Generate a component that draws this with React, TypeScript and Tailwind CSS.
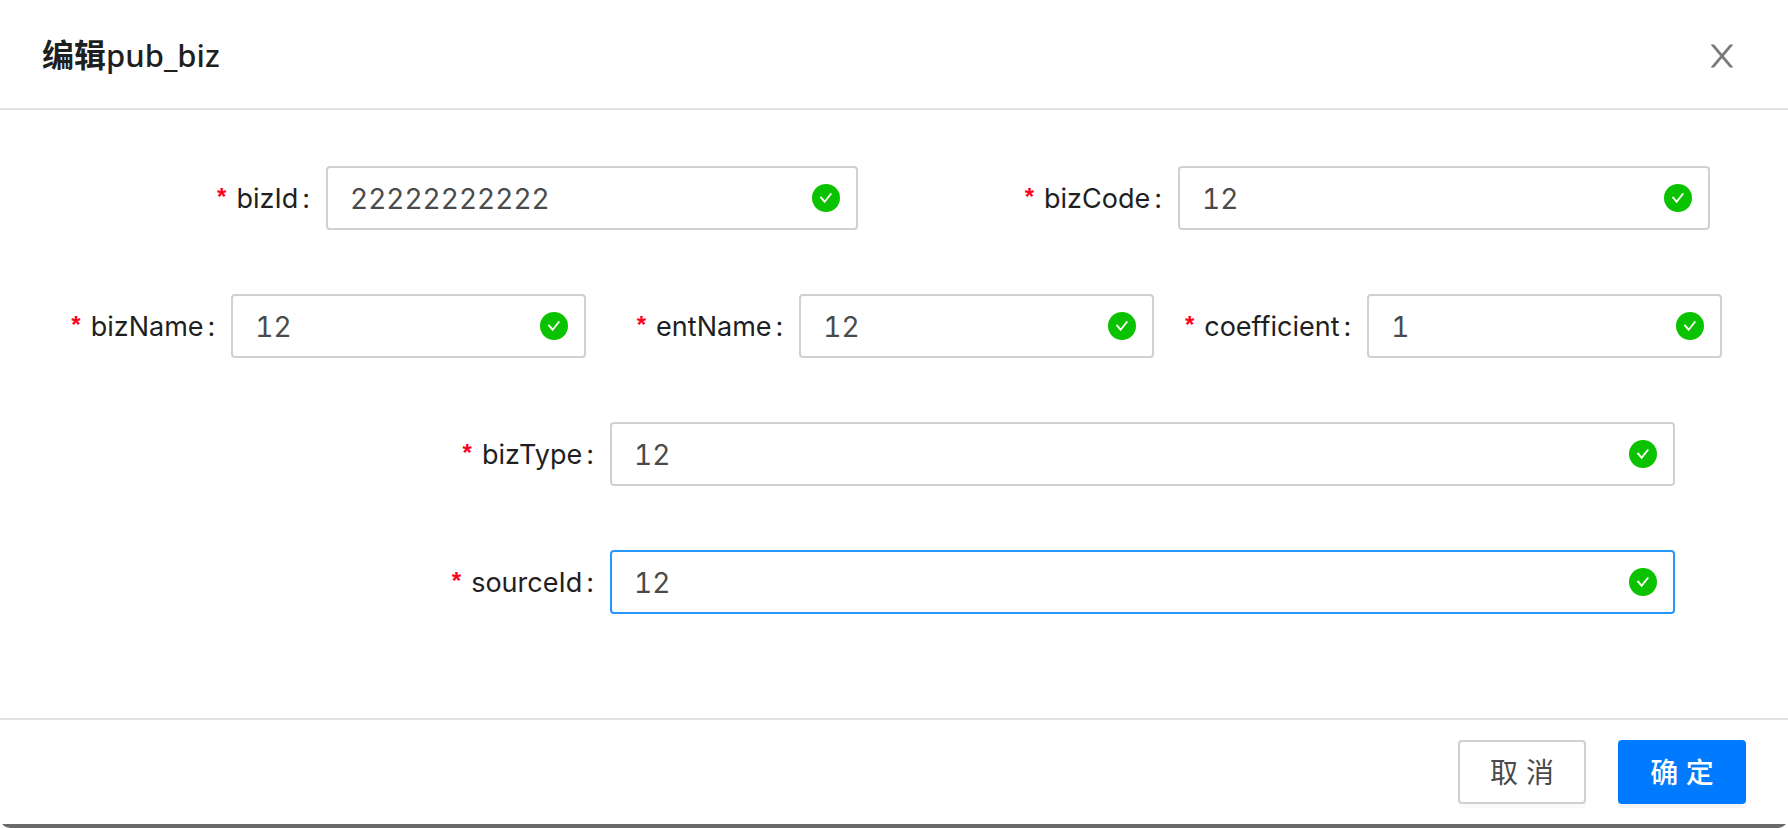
import { useState } from "react";

type FieldProps = {
  name: string;
  initial: string;
  focused?: boolean;
};

function SuccessIcon() {
  return (
    <svg
      viewBox="0 0 28 28"
      className="pointer-events-none absolute top-1/2 right-[18px] size-7 -translate-y-1/2"
      aria-hidden="true"
    >
      <circle cx="14" cy="14" r="14" fill="#0bc200" />
      <path
        d="M9 13.4L12.6 17.8L18.8 10"
        fill="none"
        stroke="#fff"
        strokeWidth="1.9"
        strokeLinecap="round"
        strokeLinejoin="miter"
      />
    </svg>
  );
}

function Field({ name, initial, focused = false }: FieldProps) {
  const [value, setValue] = useState(initial);
  const border = focused
    ? "border-[#2397ff]"
    : "border-[#d0d0d0] focus:border-[#2397ff]";
  return (
    <div className="flex min-w-0 flex-1 items-center">
      <label
        htmlFor={name}
        className="flex w-1/3 items-center justify-end pt-0.5 pr-4 text-[27px] leading-8 whitespace-nowrap text-[#1f1f1f]"
      >
        <span className="mr-2.5 pb-1 font-['Liberation_Sans',sans-serif] text-2xl leading-8 font-bold text-[#ff0020]">
          *
        </span>
        <span>{name}</span>
        <span className="ml-1">:</span>
      </label>
      <div className="relative w-[62.5%]">
        <input
          id={name}
          type="text"
          value={value}
          onChange={(e) => setValue(e.target.value)}
          className={`h-16 w-full rounded-[4px] border-2 bg-white pt-0.5 pr-14 pl-[22px] text-[28px] text-[#4a4a4a] tabular-nums outline-none ${border}`}
        />
        <SuccessIcon />
      </div>
    </div>
  );
}

export default function App() {
  return (
    <div className="overflow-hidden rounded-b-[10px] bg-white font-['Inter','Noto_Sans_CJK_SC',sans-serif]">
      <header className="flex h-[110px] items-center justify-between border-b-2 border-[#e1e1e1] px-[42px]">
        <h1 className="font-['Noto_Sans_CJK_SC',sans-serif] text-[32px] leading-11 font-bold text-[#1f1f1f]">
          编辑
          <span className="font-['Noto_Sans',sans-serif] text-[31px] font-medium">pub_biz</span>
        </h1>
        <button type="button" aria-label="关闭" className="mt-1 mr-1.5 text-[#7a7a7a]">
          <svg viewBox="0 0 1024 1024" className="size-9" fill="currentColor" aria-hidden="true">
            <path d="M563.8 512l262.5-312.9c4.4-5.2.7-13.1-6.1-13.1h-79.8c-4.7 0-9.2 2.1-12.3 5.7L511.6 449.8 295.1 191.7c-3-3.6-7.5-5.7-12.3-5.7H203c-6.8 0-10.5 7.9-6.1 13.1L459.4 512 196.9 824.9A7.95 7.95 0 0 0 203 838h79.8c4.7 0 9.2-2.1 12.3-5.7l216.5-258.1 216.5 258.1c3 3.6 7.5 5.7 12.3 5.7h79.8c6.8 0 10.5-7.9 6.1-13.1L563.8 512z" />
          </svg>
        </button>
      </header>

      <form className="flex flex-col gap-16 px-[42px] pt-14 pb-26">
        <div className="flex">
          <Field name="bizId" initial="22222222222" />
          <Field name="bizCode" initial="12" />
        </div>
        <div className="flex">
          <Field name="bizName" initial="12" />
          <Field name="entName" initial="12" />
          <Field name="coefficient" initial="1" />
        </div>
        <div className="flex">
          <Field name="bizType" initial="12" />
        </div>
        <div className="flex">
          <Field name="sourceId" initial="12" focused />
        </div>
      </form>

      <footer className="flex justify-end gap-8 border-t-2 border-[#e1e1e1] px-[42px] py-5 text-[28px]">
        <button
          type="button"
          className="h-16 w-32 rounded-[4px] border-2 border-[#d0d0d0] bg-white pt-0.5 text-[#4a4a4a] shadow-[0_4px_0_rgba(0,0,0,0.02)]"
        >
          取 消
        </button>
        <button
          type="button"
          className="h-16 w-32 rounded-[4px] bg-[#007aff] pt-0.5 font-medium text-white shadow-[0_4px_0_rgba(0,0,0,0.045)]"
        >
          确 定
        </button>
      </footer>
      <div className="h-1 bg-[#6a6a6a]" />
    </div>
  );
}
